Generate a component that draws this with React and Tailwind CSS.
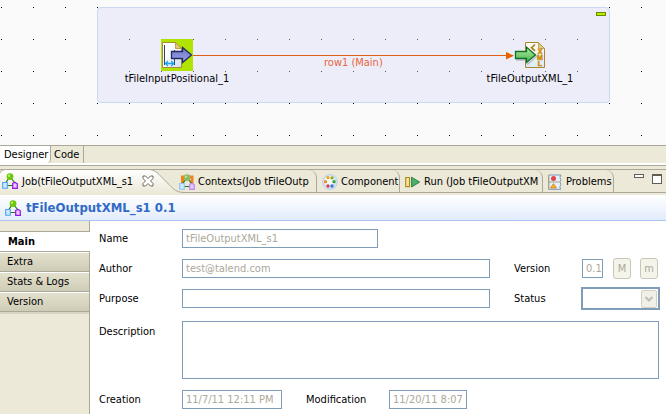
import React from "react";

const fieldClass =
  "h-[19px] min-w-0 rounded-none border border-[#7f9db9] bg-white px-[3px] text-[11px] leading-[17px] text-[#aca899] outline-none";

function JobIcon({ framed = false }) {
  return (
    <svg width="16" height="16" viewBox="0 0 16 16" aria-hidden="true" className="shrink-0">
      {framed && <path d="M3.5 12V3H13V12" fill="none" stroke="#f58220" strokeWidth="3" />}
      <path d="M7 5 3.5 10M9 5l4 5M5 12.5h6" fill="none" stroke="#1d7d12" strokeWidth="1.2" />
      <circle cx="8" cy="3.6" r="3.4" fill={framed ? "#8cba6c" : "#6cc80c"} />
      <circle cx="7" cy="2.7" r="1.2" fill="#b5ea73" />
      <path d="M.7 9.5h4.6v5.8H.7z" fill="#cdeaff" stroke={framed ? "#8cc4f2" : "#4aa5ee"} strokeWidth="1.1" />
      <path d="m10.7 10.3 2.3-.8 2.3 1.3v4.5h-4.6z" fill="#e9c8ff" stroke={framed ? "#b98af0" : "#9413e8"} strokeWidth="1.2" />
    </svg>
  );
}

function PaletteIcon() {
  return (
    <svg width="16" height="16" viewBox="0 0 16 16" aria-hidden="true" className="shrink-0">
      <circle cx="8" cy="8" r="7.4" fill="#d4e2f5" stroke="#b2c6e4" strokeWidth=".7" />
      <circle cx="7.5" cy="7" r="5" fill="#f2f7ff" />
      <g fill="#fff" strokeWidth="1.3">
        <circle cx="6" cy="3.6" r="1" stroke="#e9a000" />
        <circle cx="10" cy="3.8" r="1" stroke="#8aa800" />
        <circle cx="3.6" cy="7.7" r="1" stroke="#f08a00" />
        <circle cx="12" cy="7.7" r="1" stroke="#24a020" />
        <circle cx="6" cy="12" r="1" stroke="#dd3030" />
        <circle cx="10" cy="12" r="1" stroke="#2f6fdd" />
      </g>
    </svg>
  );
}

function RunIcon() {
  return (
    <svg width="16" height="16" viewBox="0 0 16 16" aria-hidden="true" className="shrink-0">
      <path d="M.7 3.5h3.8v9.2H.7z" fill="#f7e6a0" stroke="#b58a1a" strokeWidth="1.2" />
      <path d="M6.6 3.2v9.8l8-4.9z" fill="#4fae6a" stroke="#2a8547" />
    </svg>
  );
}

function ProblemsIcon() {
  return (
    <svg width="15" height="16" viewBox="0 0 15 16" aria-hidden="true" className="shrink-0">
      <path d="M.7 1h12.2l-1 2.4 1 2.3-1 2.3 1 2.4-1 2.3.6 2.6H.7z" fill="#e5effb" stroke="#6f8fae" strokeWidth=".9" />
      <path d="M.7 1v14.3M.5 8h11" stroke="#a2a680" />
      <circle cx="5.5" cy="4.6" r="2.5" fill="#e04646" />
      <path d="m5.5 9.7 3 4.3h-6z" fill="#f6b42a" stroke="#cf7e10" strokeWidth=".8" />
    </svg>
  );
}

function InputNodeIcon() {
  return (
    <svg width="32" height="32" viewBox="0 0 32 32" aria-hidden="true">
      <defs>
        <linearGradient id="sheetA" x1="0" y1="0" x2="1" y2="1">
          <stop offset=".3" stopColor="#fff" />
          <stop offset="1" stopColor="#cfe0f5" />
        </linearGradient>
        <linearGradient id="blueArrow" x1="0" y1="0" x2="0" y2="1">
          <stop offset="0" stopColor="#6d77bd" />
          <stop offset="1" stopColor="#9aa4ee" />
        </linearGradient>
      </defs>
      <path d="M0 0h32v32H0z" fill="#b1e300" />
      <path d="M1.5 3.5h13l6 6v19h-19z" fill="url(#sheetA)" stroke="#a98a3c" />
      <path d="m14.5 3.5 6 6h-6z" fill="#e3c678" stroke="#b98f2e" strokeWidth=".8" />
      <path d="M3.5 6v20M13.5 11v15" stroke="#33415a" />
      <path d="M4.5 24.5h8M7 22l-2.5 2.5L7 27M10.2 22l2.5 2.5-2.5 2.5" fill="none" stroke="#1aa4f5" strokeWidth="1.3" />
      <path d="M10.5 12.5h11v-4l9 7.5-9 7.5v-4h-11z" fill="url(#blueArrow)" stroke="#242a66" strokeWidth="1.3" />
    </svg>
  );
}

function OutputNodeIcon() {
  return (
    <svg width="32" height="32" viewBox="0 0 32 32" aria-hidden="true">
      <defs>
        <linearGradient id="greenArrow" x1="0" y1="0" x2="0" y2="1">
          <stop offset="0" stopColor="#b8efa2" />
          <stop offset="1" stopColor="#43b04c" />
        </linearGradient>
        <linearGradient id="sheetB" x1="0" y1="0" x2="0" y2="1">
          <stop offset="0" stopColor="#fffdf4" />
          <stop offset="1" stopColor="#dbe9f8" />
        </linearGradient>
      </defs>
      <path d="M11.5 3.5h13l6 6v19h-19z" fill="url(#sheetB)" stroke="#ab8630" />
      <path d="m24.5 3.5 6 6h-6z" fill="#dfc98e" stroke="#b99540" strokeWidth=".8" />
      <path d="m21 5.5-3.5 3.2 3.5 3.2" fill="none" stroke="#b27d0a" strokeWidth="1.6" />
      <g fill="#d08c00" stroke="#d08c00" strokeWidth=".5" fontFamily="Liberation Sans, sans-serif" fontWeight="700" fontSize="7" textAnchor="middle">
        <text x="26" y="15">X</text>
        <text x="26" y="21">M</text>
        <text x="26" y="27">L</text>
      </g>
      <path d="M2 21h12v4l9-8" fill="none" stroke="#8d8d99" strokeOpacity=".5" strokeWidth="1.4" />
      <path d="M1.5 12.5h11V8.1l9 7.9-9 7.4v-3.9h-11z" fill="url(#greenArrow)" stroke="#0f702c" strokeWidth="1.3" />
    </svg>
  );
}

function Canvas() {
  return (
    <section
      aria-label="Job designer"
      className="h-[145px] bg-[#fafafa] bg-[radial-gradient(circle_at_0.5px_0.5px,#000_0.7px,transparent_0.7px)] bg-[length:32px_32px] bg-[position:1px_7px] pt-[7px]"
    >
      <div className="relative mr-[56px] ml-[97px] h-24 rounded border border-[#cbd8f2] bg-[rgba(219,219,250,0.41)]">
        <button aria-label="Collapse subjob" className="absolute top-1 right-[3px] h-1 w-2.5 border border-[#6a8a00] bg-[#b5ee00]" />
        <div className="absolute top-[47px] right-[96px] left-[95px] h-px bg-[#de5f14]" />
        <svg width="8" height="8" viewBox="0 0 8 8" aria-hidden="true" className="absolute top-[44px] right-[95px]">
          <path d="M0 0v7.4L8 3.7z" fill="#e66000" />
        </svg>
        <span className="absolute top-12 left-[226px] text-[#e8653c]">row1 (Main)</span>
        <div className="absolute top-[31px] left-[19px] flex w-[120px] flex-col items-center gap-px">
          <InputNodeIcon />
          <span>tFileInputPositional_1</span>
        </div>
        <div className="absolute top-[31px] right-[19px] flex w-[120px] flex-col items-center gap-px">
          <OutputNodeIcon />
          <span>tFileOutputXML_1</span>
        </div>
      </div>
    </section>
  );
}

function ViewTab({ icon, children, width }) {
  return (
    <button role="tab" className={`flex h-[23px] shrink-0 items-center gap-[3px] overflow-hidden rounded-tr-lg border-r border-[#aca899] pl-[5px] ${width}`}>
      {icon}
      <span className="pt-px">{children}</span>
    </button>
  );
}

function ViewTabs() {
  return (
    <div className="flex h-[24px] border-y border-[#aca899] bg-[#ece9d8]" role="tablist">
      <div className="relative flex w-[174px] shrink-0 items-center pl-[2px]">
        <svg width="190" height="24" viewBox="0 0 190 24" aria-hidden="true" className="absolute top-[-1px] left-0">
          <defs>
            <linearGradient id="activeTab" x1="0" y1="0" x2="0" y2="1">
              <stop offset="0" stopColor="#fff" />
              <stop offset="1" stopColor="#ece9d8" />
            </linearGradient>
          </defs>
          <path d="M0 24V4Q1 .5 5 .5h143c7 0 10 4 14 8l9 9c4 4 7 6 14 6h5V24z" fill="url(#activeTab)" />
          <path d="M0 4Q1 .5 5 .5h143c7 0 10 4 14 8l9 9c4 4 7 6 14 6h5" fill="none" stroke="#aca899" />
        </svg>
        <button role="tab" aria-selected="true" className="relative flex items-center gap-1">
          <JobIcon />
          <span className="pt-px">Job(tFileOutputXML_s1</span>
        </button>
        <button aria-label="Close" className="absolute top-[5px] left-[142px]">
          <svg width="12" height="12" viewBox="0 0 12 12" aria-hidden="true">
            <path d="M1 1h2.5L6 3.5 8.5 1H11v2.5L8.5 6 11 8.5V11H8.5L6 8.5 3.5 11H1V8.5L3.5 6 1 3.5z" fill="#fff" stroke="#6c6a60" />
          </svg>
        </button>
      </div>
      <ViewTab icon={<JobIcon framed />} width="relative w-[143px]">Contexts(Job tFileOutp</ViewTab>
      <ViewTab icon={<PaletteIcon />} width="w-[83px]">Component</ViewTab>
      <ViewTab icon={<RunIcon />} width="w-[143px]">Run (Job tFileOutputXM</ViewTab>
      <ViewTab icon={<ProblemsIcon />} width="w-[71px]">Problems</ViewTab>
      <div className="ml-auto flex items-start gap-2 pt-1 pr-1">
        <button aria-label="Minimize" className="h-1 w-2.5 border border-[#5f5d54] bg-white" />
        <button aria-label="Maximize" className="h-2.5 w-2.5 border border-t-2 border-[#5f5d54] bg-white" />
      </div>
    </div>
  );
}

function Sidebar() {
  return (
    <nav aria-label="Properties" className="flex w-[90px] shrink-0 flex-col bg-[#ece9d8]">
      <div className="h-[10px] border-r border-[#aca899]" />
      <button className="h-[20px] border-t border-[#aca899] bg-white pl-2 text-left font-bold">Main</button>
      {["Extra", "Stats & Logs", "Version"].map((name) => (
        <button
          key={name}
          className="h-5 border-t border-r border-[#aca899] bg-linear-to-b from-[#e4e1ce] to-[#cfccb6] pl-[7px] text-left shadow-[inset_0_1px_0_#fff]"
        >
          {name}
        </button>
      ))}
      <div className="min-h-0 flex-1 border-t border-r border-[#aca899] shadow-[inset_0_2px_0_#d8d5c3]" />
    </nav>
  );
}

function VersionButton({ children }) {
  return (
    <button disabled className="h-[21px] w-[18px] shrink-0 rounded-[3px] border border-[#c9c7ba] bg-[#f5f4ea] text-center text-[#aca899]">
      {children}
    </button>
  );
}

function JobForm() {
  return (
    <form className="flex min-w-0 flex-1 flex-col bg-white pt-2 pr-1.5 pb-[5px] pl-[9px]">
      <div className="flex items-center">
        <label htmlFor="name" className="w-[83px] shrink-0 pt-px">Name</label>
        <input id="name" readOnly defaultValue="tFileOutputXML_s1" className={`${fieldClass} w-[196px]`} />
      </div>
      <div className="mt-2.5 flex h-[21px] items-center">
        <label htmlFor="author" className="w-[83px] shrink-0 pt-px">Author</label>
        <input id="author" readOnly defaultValue="test@talend.com" className={`${fieldClass} mr-6 flex-1`} />
        <div className="flex w-[146px] shrink-0 items-center">
          <label htmlFor="version" className="w-[68px] shrink-0 pt-px">Version</label>
          <input id="version" readOnly defaultValue="0.1" className={`${fieldClass} mr-2.5 w-[21px] pr-0`} />
          <VersionButton>M</VersionButton>
          <span className="w-[9px]" />
          <VersionButton>m</VersionButton>
        </div>
      </div>
      <div className="mt-[9px] flex h-[21px] items-center">
        <label htmlFor="purpose" className="w-[83px] shrink-0 pt-px">Purpose</label>
        <input id="purpose" readOnly className={`${fieldClass} mr-6 flex-1`} />
        <div className="flex w-[146px] shrink-0 items-center">
          <label htmlFor="status" className="w-[67px] shrink-0 pt-px">Status</label>
          <div className="relative flex-1">
            <select id="status" disabled className="block h-[23px] w-full appearance-none rounded-none border-2 border-[#7f9db9] bg-white opacity-100">
              <option></option>
            </select>
            <svg width="16" height="18" viewBox="0 0 16 18" aria-hidden="true" className="pointer-events-none absolute top-[3px] right-[3px]">
              <rect x=".5" y=".5" width="15" height="17" rx="1.5" fill="#f1f0e8" stroke="#d2d0c3" />
              <path d="m4.5 7 3.5 3.5L11.5 7" fill="none" stroke="#c2c0b2" strokeWidth="2.2" />
            </svg>
          </div>
        </div>
      </div>
      <div className="mt-3 mr-px flex items-start">
        <label htmlFor="description" className="w-[83px] shrink-0 pt-1">Description</label>
        <textarea id="description" readOnly className="block h-[58px] min-w-0 flex-1 resize-none rounded-none border border-[#7f9db9] bg-white outline-none" />
      </div>
      <div className="mt-[11px] flex items-center">
        <label htmlFor="creation" className="w-[83px] shrink-0 pt-px">Creation</label>
        <input id="creation" readOnly defaultValue="11/7/11 12:11 PM" className={`${fieldClass} mr-6 w-[100px]`} />
        <label htmlFor="modification" className="w-[83px] shrink-0 pt-px">Modification</label>
        <input id="modification" readOnly defaultValue="11/20/11 8:07" className={`${fieldClass} w-[78px]`} />
      </div>
    </form>
  );
}

export default function App() {
  return (
    <main className="flex min-h-screen flex-col bg-[#ece9d8] font-['DejaVu_Sans_Condensed','DejaVu_Sans',sans-serif] text-[11px] leading-[14px] whitespace-nowrap text-black">
      <Canvas />
      <div role="tablist" className="flex h-[18px] shrink-0 border-t border-[#aca899]">
        <button role="tab" aria-selected="true" className="w-[51px] rounded-br-sm border-r border-[#aca899] bg-white pl-1 text-left">Designer</button>
        <button role="tab" className="w-[33px] border-r border-[#aca899] pl-[3px] text-left">Code</button>
      </div>
      <div className="mb-[3px] h-[3px] shrink-0 border-b border-[#aca899] bg-white" />
      <ViewTabs />
      <header className="mt-0.5 flex h-[26px] shrink-0 items-center gap-[5px] border-b border-[#a9c5f5] bg-linear-to-b from-white to-[#e3ecfc] pl-[5px]">
        <JobIcon />
        <h1 className="pt-px text-[13px] leading-4 font-bold text-[#316ac5]">tFileOutputXML_s1 0.1</h1>
      </header>
      <div className="flex flex-1">
        <Sidebar />
        <JobForm />
      </div>
    </main>
  );
}
